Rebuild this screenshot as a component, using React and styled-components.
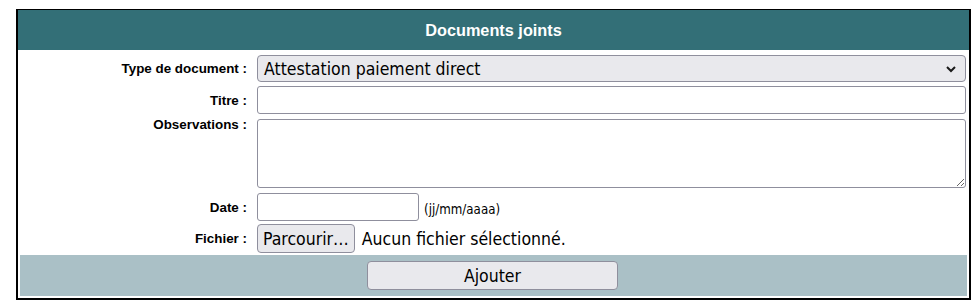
import React from "react";
import styled, { createGlobalStyle } from "styled-components";

const GlobalStyle = createGlobalStyle`
  body {
    margin: 0;
    background: #ffffff;
    font-family: "DejaVu Sans Condensed", "DejaVu Sans", sans-serif;
  }
`;

const Page = styled.div`
  padding: 9px 6px 0 16px;
`;

const Panel = styled.div`
  width: 951px;
  border: 2px solid #000000;
  border-top-width: 1px;
  background: #ffffff;
`;

const Header = styled.div`
  height: 40px;
  background: #336f77;
  color: #ffffff;
  font-family: "Liberation Sans", Arial, sans-serif;
  font-weight: bold;
  font-size: 16.3px;
  display: flex;
  align-items: center;
  justify-content: center;
`;

const Form = styled.div`
  display: grid;
  grid-template-columns: 229px 1fr;
  column-gap: 10px;
  padding: 5px 3px 1px 0;
`;

const Label = styled.div`
  font-family: "Liberation Sans", Arial, sans-serif;
  font-size: 13.4px;
  font-weight: bold;
  color: #000000;
  text-align: right;
  display: flex;
  align-items: ${({ top }) => (top ? "flex-start" : "center")};
  justify-content: flex-end;
  margin-top: ${({ top }) => (top ? "-2px" : "0")};
  margin-bottom: ${({ gap }) => gap}px;
`;

const Field = styled.div`
  display: flex;
  align-items: center;
  gap: 5px;
  margin-bottom: ${({ gap }) => gap}px;
`;

const Select = styled.div`
  flex: 1;
  height: 27px;
  box-sizing: border-box;
  border: 1px solid #8f8f9d;
  border-radius: 4px;
  background: #e9e9ed;
  font-size: 17.5px;
  padding: 0 8px 0 6px;
  display: flex;
  align-items: center;
  justify-content: space-between;
  color: #000;
`;

const Input = styled.input`
  box-sizing: border-box;
  height: 28px;
  width: ${({ w }) => (w ? `${w}px` : "100%")};
  border: 1px solid #8f8f9d;
  border-radius: 3px;
  background: #ffffff;
  font-family: inherit;
  font-size: 17.5px;
  padding: 0 4px;
  margin: 0;
`;

const TextArea = styled.textarea`
  box-sizing: border-box;
  width: 100%;
  height: 69px;
  border: 1px solid #8f8f9d;
  border-radius: 3px;
  background: #ffffff;
  font-family: inherit;
  font-size: 17.5px;
  margin: 0;
  display: block;
`;

const Hint = styled.span`
  font-size: 13.2px;
  color: #000;
  margin-top: 5px;
`;

const Button = styled.button`
  box-sizing: border-box;
  height: 29px;
  width: ${({ w }) => (w ? `${w}px` : "auto")};
  border: 1px solid #8f8f9d;
  border-radius: 4px;
  background: #e9e9ed;
  font-family: inherit;
  font-size: 17.5px;
  color: #000;
  padding: 0 5px;
  margin: 0;
`;

const FileName = styled.span`
  font-size: 17.5px;
  color: #000;
  margin-left: 2px;
`;

const Footer = styled.div`
  margin: 0 2px 2px 2px;
  height: 41px;
  background: #aac0c6;
  display: flex;
  align-items: center;
  justify-content: center;
  padding-right: 2px;
`;

const Chevron = () => (
  <svg width="12" height="8" viewBox="0 0 12 8">
    <path d="M2 2 L6 6 L10 2" fill="none" stroke="#1a1a1a" strokeWidth="2" />
  </svg>
);

export default function App() {
  return (
    <>
      <GlobalStyle />
      <Page>
        <Panel>
          <Header>Documents joints</Header>
          <Form>
            <Label gap={4}>Type de document :</Label>
            <Field gap={4}>
              <Select>
                <span>Attestation paiement direct</span>
                <Chevron />
              </Select>
            </Field>
            <Label gap={5}>Titre :</Label>
            <Field gap={5}>
              <Input type="text" />
            </Field>
            <Label top gap={5}>Observations :</Label>
            <Field gap={5}>
              <TextArea />
            </Field>
            <Label gap={3}>Date :</Label>
            <Field gap={3}>
              <Input type="text" w={162} />
              <Hint>(jj/mm/aaaa)</Hint>
            </Field>
            <Label gap={1}>Fichier :</Label>
            <Field gap={1}>
              <Button>Parcourir…</Button>
              <FileName>Aucun fichier sélectionné.</FileName>
            </Field>
          </Form>
          <Footer>
            <Button w={251}>Ajouter</Button>
          </Footer>
        </Panel>
      </Page>
    </>
  );
}
